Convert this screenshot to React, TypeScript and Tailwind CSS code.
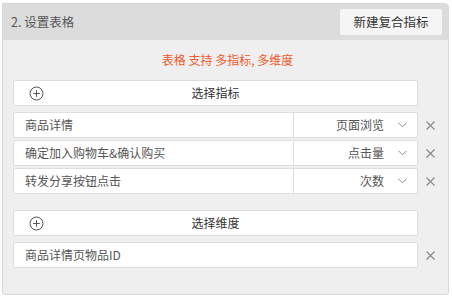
import React from "react";

const font = { fontFamily: '"Noto Sans CJK SC", "Noto Sans", sans-serif' };

function Plus() {
  return (
    <svg width="15" height="15" viewBox="0 0 15 15" className="shrink-0">
      <circle cx="7.5" cy="7.5" r="6.5" fill="none" stroke="#555" strokeWidth="1" />
      <path d="M7.5 4.2v6.6M4.2 7.5h6.6" stroke="#555" strokeWidth="1" />
    </svg>
  );
}

function Chevron() {
  return (
    <svg width="9" height="6" viewBox="0 0 9 6">
      <path d="M0.5 0.8L4.5 4.8L8.5 0.8" fill="none" stroke="#888" strokeWidth="1" />
    </svg>
  );
}

function Close() {
  return (
    <svg width="9" height="9" viewBox="0 0 9 9">
      <path d="M0.5 0.5L8.5 8.5M8.5 0.5L0.5 8.5" stroke="#888" strokeWidth="1.1" />
    </svg>
  );
}

function AddButton({ label }: { label: string }) {
  return (
    <div className="flex">
      <div className="relative flex h-[26px] flex-1 items-center justify-center rounded-[2px] border border-[#dedede] bg-white text-[12px] text-[#333]">
        <span className="absolute left-[15px] top-[5px] flex">
          <Plus />
        </span>
        {label}
      </div>
      <div className="w-[24px]" />
    </div>
  );
}

function Row({ name, metric }: { name: string; metric?: string }) {
  return (
    <div className="flex">
      <div className="flex h-[26px] flex-1 items-center rounded-[2px] border border-[#dedede] bg-white text-[12px] text-[#555]">
        <div className="flex-1 pl-[11px]">{name}</div>
        {metric && (
          <div className="flex h-full w-[124px] items-center justify-end border-l border-[#dedede] pr-[10px]">
            <span>{metric}</span>
            <span className="ml-[14px] flex">
              <Chevron />
            </span>
          </div>
        )}
      </div>
      <div className="flex w-[24px] items-center justify-center">
        <Close />
      </div>
    </div>
  );
}

export default function App() {
  return (
    <div className="h-[298px] w-[452px] bg-white pl-[2px] pt-[3px]" style={font}>
      <div className="h-[292px] w-[447px] overflow-hidden rounded-tr-[4px] rounded-b-[3px] border border-[#d8d8d8] bg-[#efefef]">
        <div className="flex h-[36px] items-center justify-between bg-[#dcdcdc] pl-[8px] pr-[6px]">
          <span className="text-[12.5px] text-[#555]">2. 设置表格</span>
          <button className="h-[26px] w-[102px] rounded-[2px] bg-[#f5f5f5] text-[12.5px] text-[#333]">
            新建复合指标
          </button>
        </div>
        <div className="pl-[10px] pr-[6px]">
          <div className="flex h-[40px] items-center justify-center text-[12px] text-[#f15a2b]">
            表格 支持 多指标, 多维度
          </div>
          <AddButton label="选择指标" />
          <div className="mt-[6px] flex flex-col gap-[2px]">
            <Row name="商品详情" metric="页面浏览" />
            <Row name="确定加入购物车&确认购买" metric="点击量" />
            <Row name="转发分享按钮点击" metric="次数" />
          </div>
          <div className="mt-[16px]">
            <AddButton label="选择维度" />
          </div>
          <div className="mt-[6px]">
            <Row name="商品详情页物品ID" />
          </div>
        </div>
      </div>
    </div>
  );
}
